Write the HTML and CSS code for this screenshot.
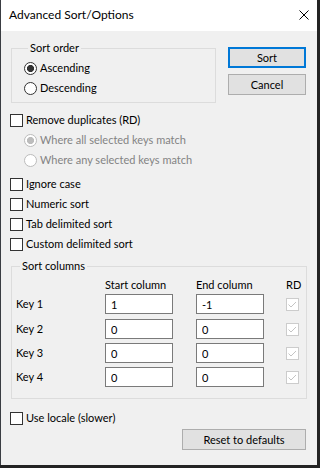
FILE: index.html
```html
<!DOCTYPE html>
<html>
<head>
<meta charset="utf-8">
<link rel="stylesheet" href="styles.css">
</head>
<body>
<div class="window">
  <div class="titlebar">
    <span class="title">Advanced Sort/Options</span>
    <svg class="close" width="10" height="10" viewBox="0 0 10 10"><path d="M0.5 0.5 L9.5 9.5 M9.5 0.5 L0.5 9.5" stroke="#000" stroke-width="1" fill="none"/></svg>
  </div>
  <div class="content">
    <div class="toprow">
      <fieldset class="group order">
        <legend>Sort order</legend>
        <label class="opt radio-opt"><span class="radio checked"></span>Ascending</label>
        <label class="opt radio-opt"><span class="radio"></span>Descending</label>
      </fieldset>
      <div class="btncol">
        <button class="btn default">Sort</button>
        <button class="btn">Cancel</button>
      </div>
    </div>
    <div class="options">
      <label class="opt chk-opt"><span class="check"></span>Remove duplicates (RD)</label>
      <label class="opt sub disabled"><span class="radio checked"></span>Where all selected keys match</label>
      <label class="opt sub disabled"><span class="radio"></span>Where any selected keys match</label>
      <label class="opt chk-opt spaced"><span class="check"></span>Ignore case</label>
      <label class="opt chk-opt"><span class="check"></span>Numeric sort</label>
      <label class="opt chk-opt"><span class="check"></span>Tab delimited sort</label>
      <label class="opt chk-opt"><span class="check"></span>Custom delimited sort</label>
    </div>
    <fieldset class="group cols">
      <legend>Sort columns</legend>
      <div class="keygrid">
        <span></span><span class="hdr">Start column</span><span class="hdr">End column</span><span class="hdr">RD</span>
        <span class="key">Key 1</span><input class="edit" value="1"><input class="edit" value="-1"><span class="check dis"><svg width="11" height="11" viewBox="0 0 11 11"><path d="M1.5 5.5 L4 8 L9 3" stroke="#c4c4c4" stroke-width="1" fill="none"/></svg></span>
        <span class="key">Key 2</span><input class="edit" value="0"><input class="edit" value="0"><span class="check dis"><svg width="11" height="11" viewBox="0 0 11 11"><path d="M1.5 5.5 L4 8 L9 3" stroke="#c4c4c4" stroke-width="1" fill="none"/></svg></span>
        <span class="key">Key 3</span><input class="edit" value="0"><input class="edit" value="0"><span class="check dis"><svg width="11" height="11" viewBox="0 0 11 11"><path d="M1.5 5.5 L4 8 L9 3" stroke="#c4c4c4" stroke-width="1" fill="none"/></svg></span>
        <span class="key">Key 4</span><input class="edit" value="0"><input class="edit" value="0"><span class="check dis"><svg width="11" height="11" viewBox="0 0 11 11"><path d="M1.5 5.5 L4 8 L9 3" stroke="#c4c4c4" stroke-width="1" fill="none"/></svg></span>
      </div>
    </fieldset>
    <label class="opt chk-opt locale"><span class="check"></span>Use locale (slower)</label>
    <div class="resetrow"><button class="btn reset">Reset to defaults</button></div>
  </div>
</div>
</body>
</html>
```
FILE: styles.css
```css
html, body {
  margin: 0;
  padding: 0;
}
body {
  width: 319px;
  height: 468px;
  background: #232323;
  font-family: Lato, "Liberation Sans", sans-serif;
  font-size: 11px;
  color: #000;
  overflow: hidden;
}
.window {
  width: 316px;
  height: 465px;
  border-left: 1px solid #3a3d42;
  background: #f0f0f0;
  display: flex;
  flex-direction: column;
}
.titlebar {
  height: 31px;
  background: #fff;
  display: flex;
  align-items: center;
  padding-left: 8px;
  padding-right: 8px;
}
.title {
  flex: 1;
  font-size: 12px;
  line-height: 16px;
  margin-top: -1px;
}
.close {
  display: block;
  margin-top: -1px;
}
.content {
  padding: 10px 10px 0 10px;
}
.toprow {
  display: flex;
  align-items: flex-start;
}
.group {
  margin: 0;
  border: 1px solid #dcdcdc;
  min-width: 0;
}
.group legend {
  line-height: 14px;
  padding: 0 2px;
  margin-left: 4px;
}
.order {
  width: 205px;
  box-sizing: border-box;
  padding: 3px 0 4px 12px;
}
.btncol {
  margin-left: auto;
  margin-right: 1px;
  margin-top: 6px;
  width: 78px;
  display: flex;
  flex-direction: column;
  gap: 6px;
}
.btn {
  font-family: inherit;
  font-size: 11px;
  color: #000;
  height: 21px;
  padding: 0;
  background: #e1e1e1;
  border: 1px solid #adadad;
  box-sizing: border-box;
  line-height: 19px;
}
.btn.default {
  border: 2px solid #0078d7;
  line-height: 17px;
}
.opt {
  display: flex;
  align-items: center;
  height: 20px;
  line-height: 20px;
}
.radio {
  width: 13px;
  height: 13px;
  box-sizing: border-box;
  border: 1px solid #333;
  border-radius: 50%;
  background: #fff;
  margin-right: 3px;
  flex: none;
}
.radio.checked {
  background: radial-gradient(circle, #333 0, #333 3.2px, #fff 3.9px);
}
.disabled {
  color: #838383;
}
.disabled .radio {
  border-color: #bcbcbc;
  background: #fff;
}
.disabled .radio.checked {
  background: radial-gradient(circle, #bcbcbc 0, #bcbcbc 3.2px, #fff 3.9px);
}
.check {
  width: 13px;
  height: 13px;
  box-sizing: border-box;
  border: 1px solid #333;
  background: #fff;
  margin-right: 3px;
  flex: none;
  display: flex;
  align-items: center;
  justify-content: center;
}
.check.dis {
  border-color: #cccccc;
  background: #fff;
  margin: 4px 0 0 0;
}
.check.dis svg {
  display: block;
}
.options {
  margin-top: 7px;
}
.chk-opt {
  margin-left: -1px;
}
.sub {
  padding-left: 13px;
}
.spaced {
  margin-top: 4px;
}
.cols {
  margin-top: 5px;
  padding: 3px 0 7px 4px;
}
.keygrid {
  display: grid;
  grid-template-columns: 89px 91px 90px 20px;
  grid-template-rows: 18px 25px 24px 24px 24px;
  align-items: start;
}
.hdr {
  line-height: 18px;
}
.key {
  line-height: 20px;
}
.edit {
  width: 68px;
  height: 20px;
  box-sizing: border-box;
  border: 1px solid #7a7a7a;
  background: #fff;
  font-family: inherit;
  font-size: 11px;
  color: #000;
  padding: 0 0 0 5px;
  margin: 0;
  outline: none;
}
.locale {
  margin-top: 9px;
}
.resetrow {
  display: flex;
  justify-content: flex-end;
  margin-top: 1px;
}
.reset {
  width: 124px;
  margin-right: 1px;
}
```
